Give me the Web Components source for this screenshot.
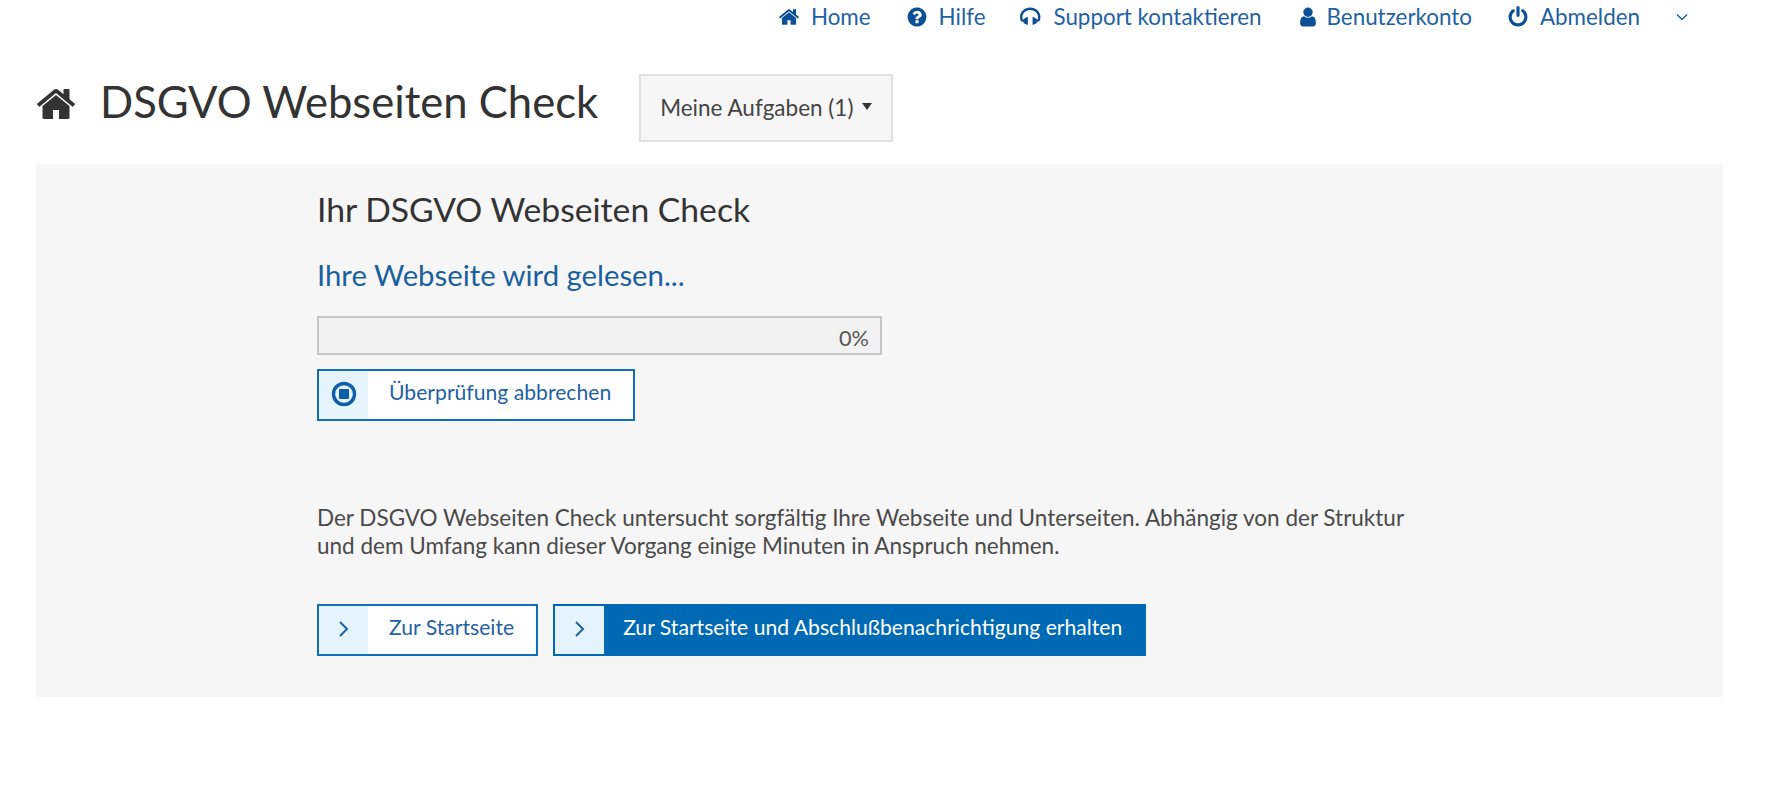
<!DOCTYPE html>
<html lang="de">
<head>
<meta charset="utf-8">
<title>DSGVO Webseiten Check</title>
<style>
	html,body{margin:0;background:#fff;}
	body{font-family:Lato,"Open Sans",sans-serif;color:#333;}
</style>
</head>
<body>
<app-nav>
	<nav-link icon="home">Home</nav-link>
	<nav-link icon="help">Hilfe</nav-link>
	<nav-link icon="headphones">Support kontaktieren</nav-link>
	<nav-link icon="user">Benutzerkonto</nav-link>
	<nav-link icon="power">Abmelden</nav-link>
</app-nav>
<page-head titulo="DSGVO Webseiten Check">
	<task-menu>Meine Aufgaben (1)</task-menu>
</page-head>
<check-panel titulo="Ihr DSGVO Webseiten Check" estado="Ihre Webseite wird gelesen...">
	<progress-bar slot="progress" value="0"></progress-bar>
	<icon-button slot="progress" icon="stop">Überprüfung abbrechen</icon-button>
	<span slot="text">Der DSGVO Webseiten Check untersucht sorgfältig Ihre Webseite und Unterseiten. Abhängig von der Struktur und dem Umfang kann dieser Vorgang einige Minuten in Anspruch nehmen.</span>
	<icon-button slot="actions" icon="next">Zur Startseite</icon-button>
	<icon-button slot="actions" icon="next" primary>Zur Startseite und Abschlußbenachrichtigung erhalten</icon-button>
</check-panel>

<script>
const ICONS = {
	home:"M1472 992v480q0 26-19 45t-45 19h-384v-384h-256v384h-384q-26 0-45-19t-19-45v-480q0-1 .5-3t.5-3l575-474 575 474q1 2 1 6zm223-69l-62 74q-8 9-21 11h-3q-13 0-21-7l-692-577-692 577q-12 8-24 7-13-2-21-11l-62-74q-8-10-7-23.5t11-21.5l719-599q32-26 76-26t76 26l244 204v-195q0-14 9-23t23-9h192q14 0 23 9t9 23v408l219 182q10 8 11 21.5t-7 23.5z",
	help:"M1024 1376v-192q0-14-9-23t-23-9h-192q-14 0-23 9t-9 23v192q0 14 9 23t23 9h192q14 0 23-9t9-23zm256-672q0-88-55.5-163t-138.5-116-170-41q-243 0-371 213-15 24 8 42l132 100q7 6 19 6 16 0 25-12 53-68 86-92 34-24 86-24 48 0 85.5 26t37.5 59q0 38-20 61t-68 45q-63 28-115.5 86.5t-52.5 125.5v36q0 14 9 23t23 9h192q14 0 23-9t9-23q0-19 21.5-49.5t54.5-49.5q32-18 49-28.5t46-35 44.5-48 28-60.5 12.5-81zm384 192q0 209-103 385.5t-279.5 279.5-385.5 103-385.5-103-279.5-279.5-103-385.5 103-385.5 279.5-279.5 385.5-103 385.5 103 279.5 279.5 103 385.5z",
	headphones:"M1664 886q0 166-60 314l-20 49-185 33q-22 83-90.5 136.5t-156.5 53.5v32q0 14-9 23t-23 9h-64q-14 0-23-9t-9-23v-576q0-14 9-23t23-9h64q14 0 23 9t9 23v32q71 0 130 35.5t93 95.5l68-12q29-95 29-193 0-148-88-279t-236.5-209-315.5-78-315.5 78-236.5 209-88 279q0 98 29 193l68 12q34-60 93-95.5t130-35.5v-32q0-14 9-23t23-9h64q14 0 23 9t9 23v576q0 14-9 23t-23 9h-64q-14 0-23-9t-9-23v-32q-88 0-156.5-53.5t-90.5-136.5l-185-33-20-49q-60-148-60-314 0-151 67-291t179-242.5 266-163.5 320-61 320 61 266 163.5 179 242.5 67 291z",
	user:"M1536 1399q0 109-62.5 187t-150.5 78h-854q-88 0-150.5-78t-62.5-187q0-85 8.5-160.5t31.5-152 58.5-131 94-89 134.5-34.5q131 128 313 128t313-128q76 0 134.5 34.5t94 89 58.5 131 31.5 152 8.5 160.5zm-256-887q0 159-112.5 271.5t-271.5 112.5-271.5-112.5-112.5-271.5 112.5-271.5 271.5-112.5 271.5 112.5 112.5 271.5z",
	power:"M1664 896q0 156-61 298t-164 245-245 164-298 61-298-61-245-164-164-245-61-298q0-182 80.5-343t226.5-270q43-32 95.5-25t83.5 50q32 42 24.5 94.5t-49.5 84.5q-98 74-151.5 181t-53.5 228q0 104 40.5 198.5t109.5 163.5 163.5 109.5 198.5 40.5 198.5-40.5 163.5-109.5 109.5-163.5 40.5-198.5q0-121-53.5-228t-151.5-181q-42-32-49.5-84.5t24.5-94.5q31-43 84-50t95 25q146 109 226.5 270t80.5 343zm-640-768v640q0 52-38 90t-90 38-90-38-38-90v-640q0-52 38-90t90-38 90 38 38 90z"
};

function icono(nombre,size){
	return `<svg xmlns="http://www.w3.org/2000/svg" width="${size}" height="${size}" viewBox="0 0 1792 1792" fill="currentColor"><path d="${ICONS[nombre]}"/></svg>`;
}

class AppNav extends HTMLElement{
	connectedCallback(){
		this.attachShadow({mode:"open"}).innerHTML = `
		<style>
			:host{display:flex;justify-content:flex-end;align-items:center;height:33px;padding-right:93px;gap:35px;color:#1a5f9e;}
			svg{display:block;}
		</style>
		<slot></slot>
		<span><svg width="14" height="10" viewBox="0 0 14 10" fill="none" stroke="currentColor" stroke-width="1.4"><path d="M2 2.5l5 5 5-5"/></svg></span>`;
	}
}

class NavLink extends HTMLElement{
	connectedCallback(){
		this.attachShadow({mode:"open"}).innerHTML = `
		<style>
			:host{display:inline-flex;align-items:center;gap:11px;font-size:22.4px;line-height:28px;white-space:nowrap;color:#1f62a3;}
			:host([icon="user"]) svg{margin-right:-3px;}
			svg{display:block;color:#0b4f94;}
		</style>
		${icono(this.getAttribute("icon"),22)}<slot></slot>`;
	}
}

class PageHead extends HTMLElement{
	connectedCallback(){
		this.attachShadow({mode:"open"}).innerHTML = `
		<style>
			:host{display:flex;align-items:center;padding:41px 0 22px 35px;height:68px;}
			svg{display:block;color:#333;margin:-8px 23px 0 0;}
			h1{margin:0 41px 0 0;font-size:43.6px;font-weight:400;line-height:56px;color:#333;position:relative;top:-7px;}
		</style>
		${icono("home",42)}<h1>${this.getAttribute("titulo")}</h1><slot></slot>`;
	}
}

class TaskMenu extends HTMLElement{
	connectedCallback(){
		this.attachShadow({mode:"open"}).innerHTML = `
		<style>
			:host{display:inline-flex;align-items:center;box-sizing:border-box;height:68px;padding:0 19px 2px;gap:9px;background:#f6f6f6;border:2px solid #e0e0e0;font-size:22.5px;color:#444;white-space:nowrap;}
			i{display:block;border:5px solid transparent;border-top:7px solid #333;border-bottom:0;margin-top:-2px;}
		</style>
		<slot></slot><i></i>`;
	}
}

class CheckPanel extends HTMLElement{
	connectedCallback(){
		this.attachShadow({mode:"open"}).innerHTML = `
		<style>
			:host{display:block;box-sizing:border-box;margin:0 59px 0 36px;height:533px;padding:22px 0 0 281px;background:#f6f6f6;}
			h2{margin:0;font-size:33.7px;font-weight:400;line-height:46px;color:#333;}
			h3{margin:23px 0 0;font-size:29.3px;font-weight:400;line-height:40px;color:#1a5f9e;}
			.progress{display:flex;flex-direction:column;align-items:flex-start;gap:14px;margin-top:21px;}
			.text{margin:83px 0 0;width:1110px;font-size:22.5px;line-height:28px;color:#4a4a4a;}
			.actions{display:flex;gap:15px;margin-top:44px;}
		</style>
		<h2>${this.getAttribute("titulo")}</h2>
		<h3>${this.getAttribute("estado")}</h3>
		<div class="progress"><slot name="progress"></slot></div>
		<p class="text"><slot name="text"></slot></p>
		<div class="actions"><slot name="actions"></slot></div>`;
	}
}

class ProgressBar extends HTMLElement{
	connectedCallback(){
		this.attachShadow({mode:"open"}).innerHTML = `
		<style>
			:host{display:flex;justify-content:flex-end;align-items:center;box-sizing:border-box;width:565px;height:39px;padding:4px 11px 0 0;background:#f2f2f2;border:2px solid #c6c6c6;font-size:21.7px;color:#555;}
		</style>
		${this.getAttribute("value")}%`;
	}
}

class IconButton extends HTMLElement{
	connectedCallback(){
		const glifo = this.getAttribute("icon") === "stop"
			? `<svg width="26" height="26" viewBox="0 0 26 26"><circle cx="13" cy="13" r="10.5" fill="none" stroke="#0b5ea8" stroke-width="3.4"/><rect x="8" y="8" width="10" height="10" rx="1" fill="#0b5ea8"/></svg>`
			: `<svg width="14" height="20" viewBox="0 0 14 20" fill="none" stroke="#1f62a3" stroke-width="2"><path d="M3 3l7 7-7 7"/></svg>`;
		this.attachShadow({mode:"open"}).innerHTML = `
		<style>
			:host{display:inline-flex;box-sizing:border-box;height:52px;border:2px solid #0f6fb8;background:#fff;color:#1f62a3;font-size:21.15px;white-space:nowrap;}
			:host([primary]){background:#0069b4;color:#fff;border-color:#0069b4;}
			.ico{display:flex;align-items:center;justify-content:center;width:49px;padding-bottom:2px;box-sizing:border-box;background:#e5f3fd;}
			.txt{display:flex;align-items:center;padding:0 22px 6px 21px;}
			:host([primary]) .txt{padding:0 22px 6px 19px;}
			svg{display:block;}
		</style>
		<span class="ico">${glifo}</span><span class="txt"><slot></slot></span>`;
	}
}

customElements.define("app-nav",AppNav);
customElements.define("nav-link",NavLink);
customElements.define("page-head",PageHead);
customElements.define("task-menu",TaskMenu);
customElements.define("check-panel",CheckPanel);
customElements.define("progress-bar",ProgressBar);
customElements.define("icon-button",IconButton);
</script>
</body>
</html>
